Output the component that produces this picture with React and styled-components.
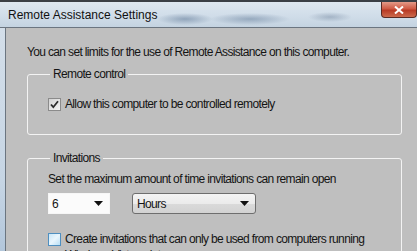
import React from 'react';
import styled, { createGlobalStyle } from 'styled-components';

const GlobalStyle = createGlobalStyle`
  html, body {
    margin: 0;
    padding: 0;
    overflow: hidden;
    background: #bfbfbf;
  }
  body {
    font-family: "Liberation Sans", Arial, sans-serif;
    font-size: 12px;
    letter-spacing: -0.65px;
    color: #141414;
  }
`;

const ArrowDown = () => (
  <svg width="9" height="5" viewBox="0 0 9 5">
    <path d="M0 0 H9 L4.5 5 Z" fill="#111" />
  </svg>
);

const Check = () => (
  <svg width="11" height="11" viewBox="0 0 11 11">
    <path d="M2 5.5 L4.3 8.2 L9 2.3" fill="none" stroke="#2b2b2b" strokeWidth="1.8" />
  </svg>
);

const App = () => {
  return (
    <Window>
      <GlobalStyle />
      <TitleBar>
        <Title>Remote Assistance Settings</Title>
        <CloseButton>
          <svg width="10" height="8" viewBox="0 0 10 8">
            <path d="M1 0.5 L9 7.5 M9 0.5 L1 7.5" stroke="#fff" strokeWidth="2" />
          </svg>
        </CloseButton>
      </TitleBar>
      <Body>
        <Frame />
        <Content>
          <Intro>You can set limits for the use of Remote Assistance on this computer.</Intro>
          <Group $pt={14} $pb={22}>
            <Legend>Remote control</Legend>
            <CheckRow>
              <CheckBox>
                <Check />
              </CheckBox>
              <span>Allow this computer to be controlled remotely</span>
            </CheckRow>
          </Group>
          <Group $pt={5} $pb={20} $mt={15}>
            <Legend>Invitations</Legend>
            <Text>Set the maximum amount of time invitations can remain open</Text>
            <ComboRow>
              <Combo $w={62} $plain>
                <span>6</span>
                <ArrowDown />
              </Combo>
              <Combo $w={124}>
                <span>Hours</span>
                <ArrowDown />
              </Combo>
            </ComboRow>
            <CheckRow $mt={17} $top>
              <CheckBox $hover />
              <span>
                Create invitations that can only be used from computers running
                <br />
                Windows Vista or later
              </span>
            </CheckRow>
          </Group>
        </Content>
      </Body>
    </Window>
  );
};

export default App;

const Window = styled.div`
  width: 417px;
  height: 251px;
  display: flex;
  flex-direction: column;
  overflow: hidden;
`;

const TitleBar = styled.div`
  height: 25px;
  flex-shrink: 0;
  display: flex;
  align-items: flex-start;
  justify-content: space-between;
  border-top: 2px solid #3a3f45;
  border-bottom: 1px solid #6b7580;
  background:
    radial-gradient(ellipse 28px 6px at 185px 17px, rgba(95, 120, 150, 0.55), transparent),
    radial-gradient(ellipse 40px 6px at 250px 17px, rgba(95, 120, 150, 0.5), transparent),
    radial-gradient(ellipse 22px 5px at 330px 15px, rgba(110, 130, 155, 0.45), transparent),
    linear-gradient(180deg, #dde7f0 0%, #cfdce8 60%, #c4d3e1 100%);
`;

const Title = styled.div`
  padding: 6px 0 0 8px;
  font-size: 12px;
  letter-spacing: 0;
  color: #111;
`;

const CloseButton = styled.div`
  width: 34px;
  height: 15px;
  display: flex;
  align-items: center;
  justify-content: center;
  border: 1px solid #5a2a22;
  border-top: none;
  border-radius: 0 0 4px 4px;
  background: linear-gradient(180deg, #e39a88 0%, #cf5a44 45%, #b83a24 55%, #cc6a4c 100%);
`;

const Body = styled.div`
  flex: 1;
  display: flex;
`;

const Frame = styled.div`
  width: 5px;
  flex-shrink: 0;
  border-right: 1px solid #6b7580;
  background: linear-gradient(180deg, #d3dee9 0%, #c6d5e4 60%, #a9bfd6 100%);
`;

const Content = styled.div`
  flex: 1;
  padding: 16px 15px 0 21px;
  background: #bfbfbf;
`;

const Intro = styled.div`
  line-height: 16px;
  margin-bottom: 6px;
  white-space: nowrap;
`;

const Group = styled.fieldset`
  margin: ${(p) => p.$mt || 0}px 0 0;
  padding: ${(p) => p.$pt}px 10px ${(p) => p.$pb}px 20px;
  border: 1px solid #f3f3f3;
  border-radius: 3px;
  min-width: 0;
`;

const Legend = styled.legend`
  padding: 0 3px;
  margin-left: 2px;
  line-height: 16px;
`;

const Text = styled.div`
  line-height: 16px;
  white-space: nowrap;
`;

const ComboRow = styled.div`
  display: flex;
  gap: 22px;
  margin-top: 6px;
`;

const Combo = styled.div`
  width: ${(p) => p.$w}px;
  height: 21px;
  box-sizing: border-box;
  display: flex;
  align-items: center;
  justify-content: space-between;
  padding: 0 6px 0 ${(p) => (p.$plain ? 3 : 4)}px;
  border: 1px solid ${(p) => (p.$plain ? '#f6f6f6' : '#6e6e6e')};
  border-radius: ${(p) => (p.$plain ? 0 : 3)}px;
  background: ${(p) =>
    p.$plain ? '#fbfbfb' : 'linear-gradient(180deg, #f4f4f4 0%, #ebebeb 50%, #dadada 51%, #d2d2d2 100%)'};
`;

const CheckRow = styled.label`
  display: flex;
  align-items: ${(p) => (p.$top ? 'flex-start' : 'center')};
  gap: 4px;
  margin-top: ${(p) => p.$mt || 0}px;
  line-height: 16px;
  white-space: nowrap;
`;

const CheckBox = styled.span`
  width: 13px;
  height: 13px;
  box-sizing: border-box;
  flex-shrink: 0;
  display: flex;
  align-items: center;
  justify-content: center;
  margin-top: ${(p) => (p.$hover ? 2 : 0)}px;
  border: 1px solid ${(p) => (p.$hover ? '#4e8fc0' : '#8b8b8b')};
  background: ${(p) =>
    p.$hover
      ? 'linear-gradient(135deg, #c9e6f7 0%, #e9f6fd 50%, #b9dff5 100%)'
      : 'linear-gradient(135deg, #d2d2d2 0%, #f4f4f4 100%)'};
`;
